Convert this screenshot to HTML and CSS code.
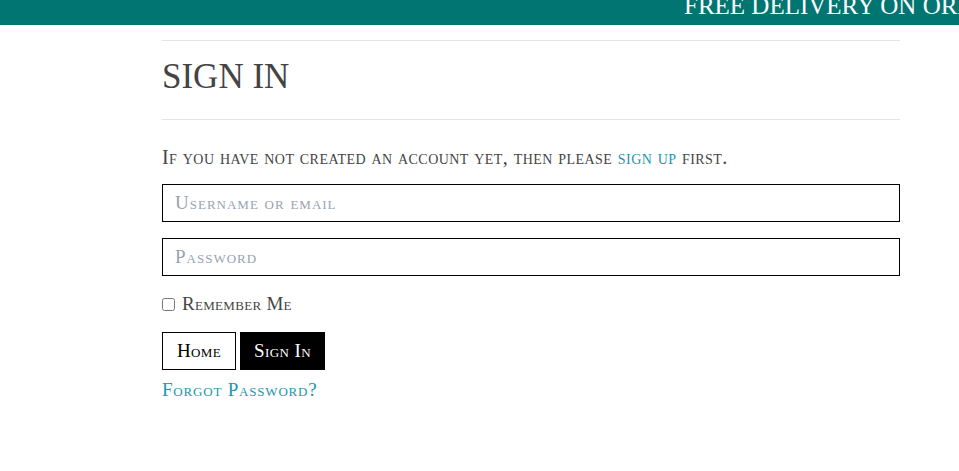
FILE: index.html
```html
<!DOCTYPE html>
<html lang="en">
<head>
<meta charset="utf-8">
<title>Sign In</title>
<link rel="stylesheet" href="styles.css">
</head>
<body>
<div class="topbar"><span class="topbar-text">Free Delivery On Orders Over $50</span></div>
<main class="container">
  <hr class="rule">
  <h1 class="title">Sign In</h1>
  <hr class="rule">
  <p class="intro">If you have not created an account yet, then please <a href="#" class="link">sign up</a> first.</p>
  <form class="form">
    <input class="field" type="text" placeholder="Username or email">
    <input class="field" type="password" placeholder="Password">
    <label class="remember"><input type="checkbox" class="check"> Remember Me</label>
    <div class="buttons">
      <a href="#" class="btn btn-outline">Home</a>
      <button type="button" class="btn btn-dark">Sign In</button>
    </div>
    <a href="#" class="link forgot">Forgot Password?</a>
  </form>
</main>
</body>
</html>
```
FILE: styles.css
```css
* { box-sizing: border-box; }
html, body { margin: 0; padding: 0; background: #fff; }
body {
  font-family: "Liberation Serif", "DejaVu Serif", serif;
  color: #444;
  width: 959px;
  overflow: hidden;
}
.topbar {
  height: 25px;
  background: #007572;
  overflow: hidden;
  position: relative;
  white-space: nowrap;
}
.topbar-text {
  position: absolute;
  left: 684px;
  top: -9px;
  color: #fff;
  font-size: 25px;
  text-transform: uppercase;
  letter-spacing: 0;
  line-height: 30px;
}
.container {
  width: 738px;
  margin-left: 162px;
  padding-top: 15px;
}
.rule {
  border: 0;
  border-top: 1px solid #e4e4e4;
  margin: 0;
}
.title {
  margin: 0;
  height: 78px;
  padding-top: 16px;
  font-size: 35px;
  line-height: 40px;
  font-weight: normal;
  text-transform: uppercase;
  letter-spacing: 0;
  color: #444;
}
.intro {
  margin: 25px 0 0;
  font-size: 20px;
  line-height: 24px;
  font-variant: small-caps;
  letter-spacing: 0.45px;
  color: #444;
}
.link { color: #1a97aa; text-decoration: none; }
.form { display: flex; flex-direction: column; align-items: flex-start; margin-top: 15px; }
.field {
  width: 738px;
  height: 38px;
  border: 1px solid #000;
  border-radius: 0;
  padding: 0 12px;
  font-family: inherit;
  font-size: 19px;
  font-variant: small-caps;
  letter-spacing: 1px;
  color: #333;
  margin: 0 0 16px;
  outline: none;
}
.field::placeholder { color: #97a3b1; font-variant: small-caps; letter-spacing: 1px; }
.remember {
  display: flex;
  align-items: center;
  gap: 7px;
  font-size: 19px;
  font-variant: small-caps;
  letter-spacing: 0.3px;
  color: #444;
  margin-top: 1px;
  height: 22px;
}
.check { margin: 0; width: 13px; height: 13px; }
.buttons { display: flex; gap: 4px; margin-top: 17px; }
.btn {
  display: inline-flex;
  align-items: center;
  justify-content: center;
  height: 38px;
  padding: 0;
  font-family: inherit;
  font-size: 19px;
  font-variant: small-caps;
  letter-spacing: 0.4px;
  text-decoration: none;
  border: 1px solid #000;
  border-radius: 0;
  cursor: pointer;
}
.btn-outline { background: #fff; color: #000; width: 74px; }
.btn-dark { background: #000; color: #fff; width: 85px; }
.forgot { font-size: 19px; font-variant: small-caps; letter-spacing: 0.8px; margin-top: 9px; line-height: 22px; }
```
